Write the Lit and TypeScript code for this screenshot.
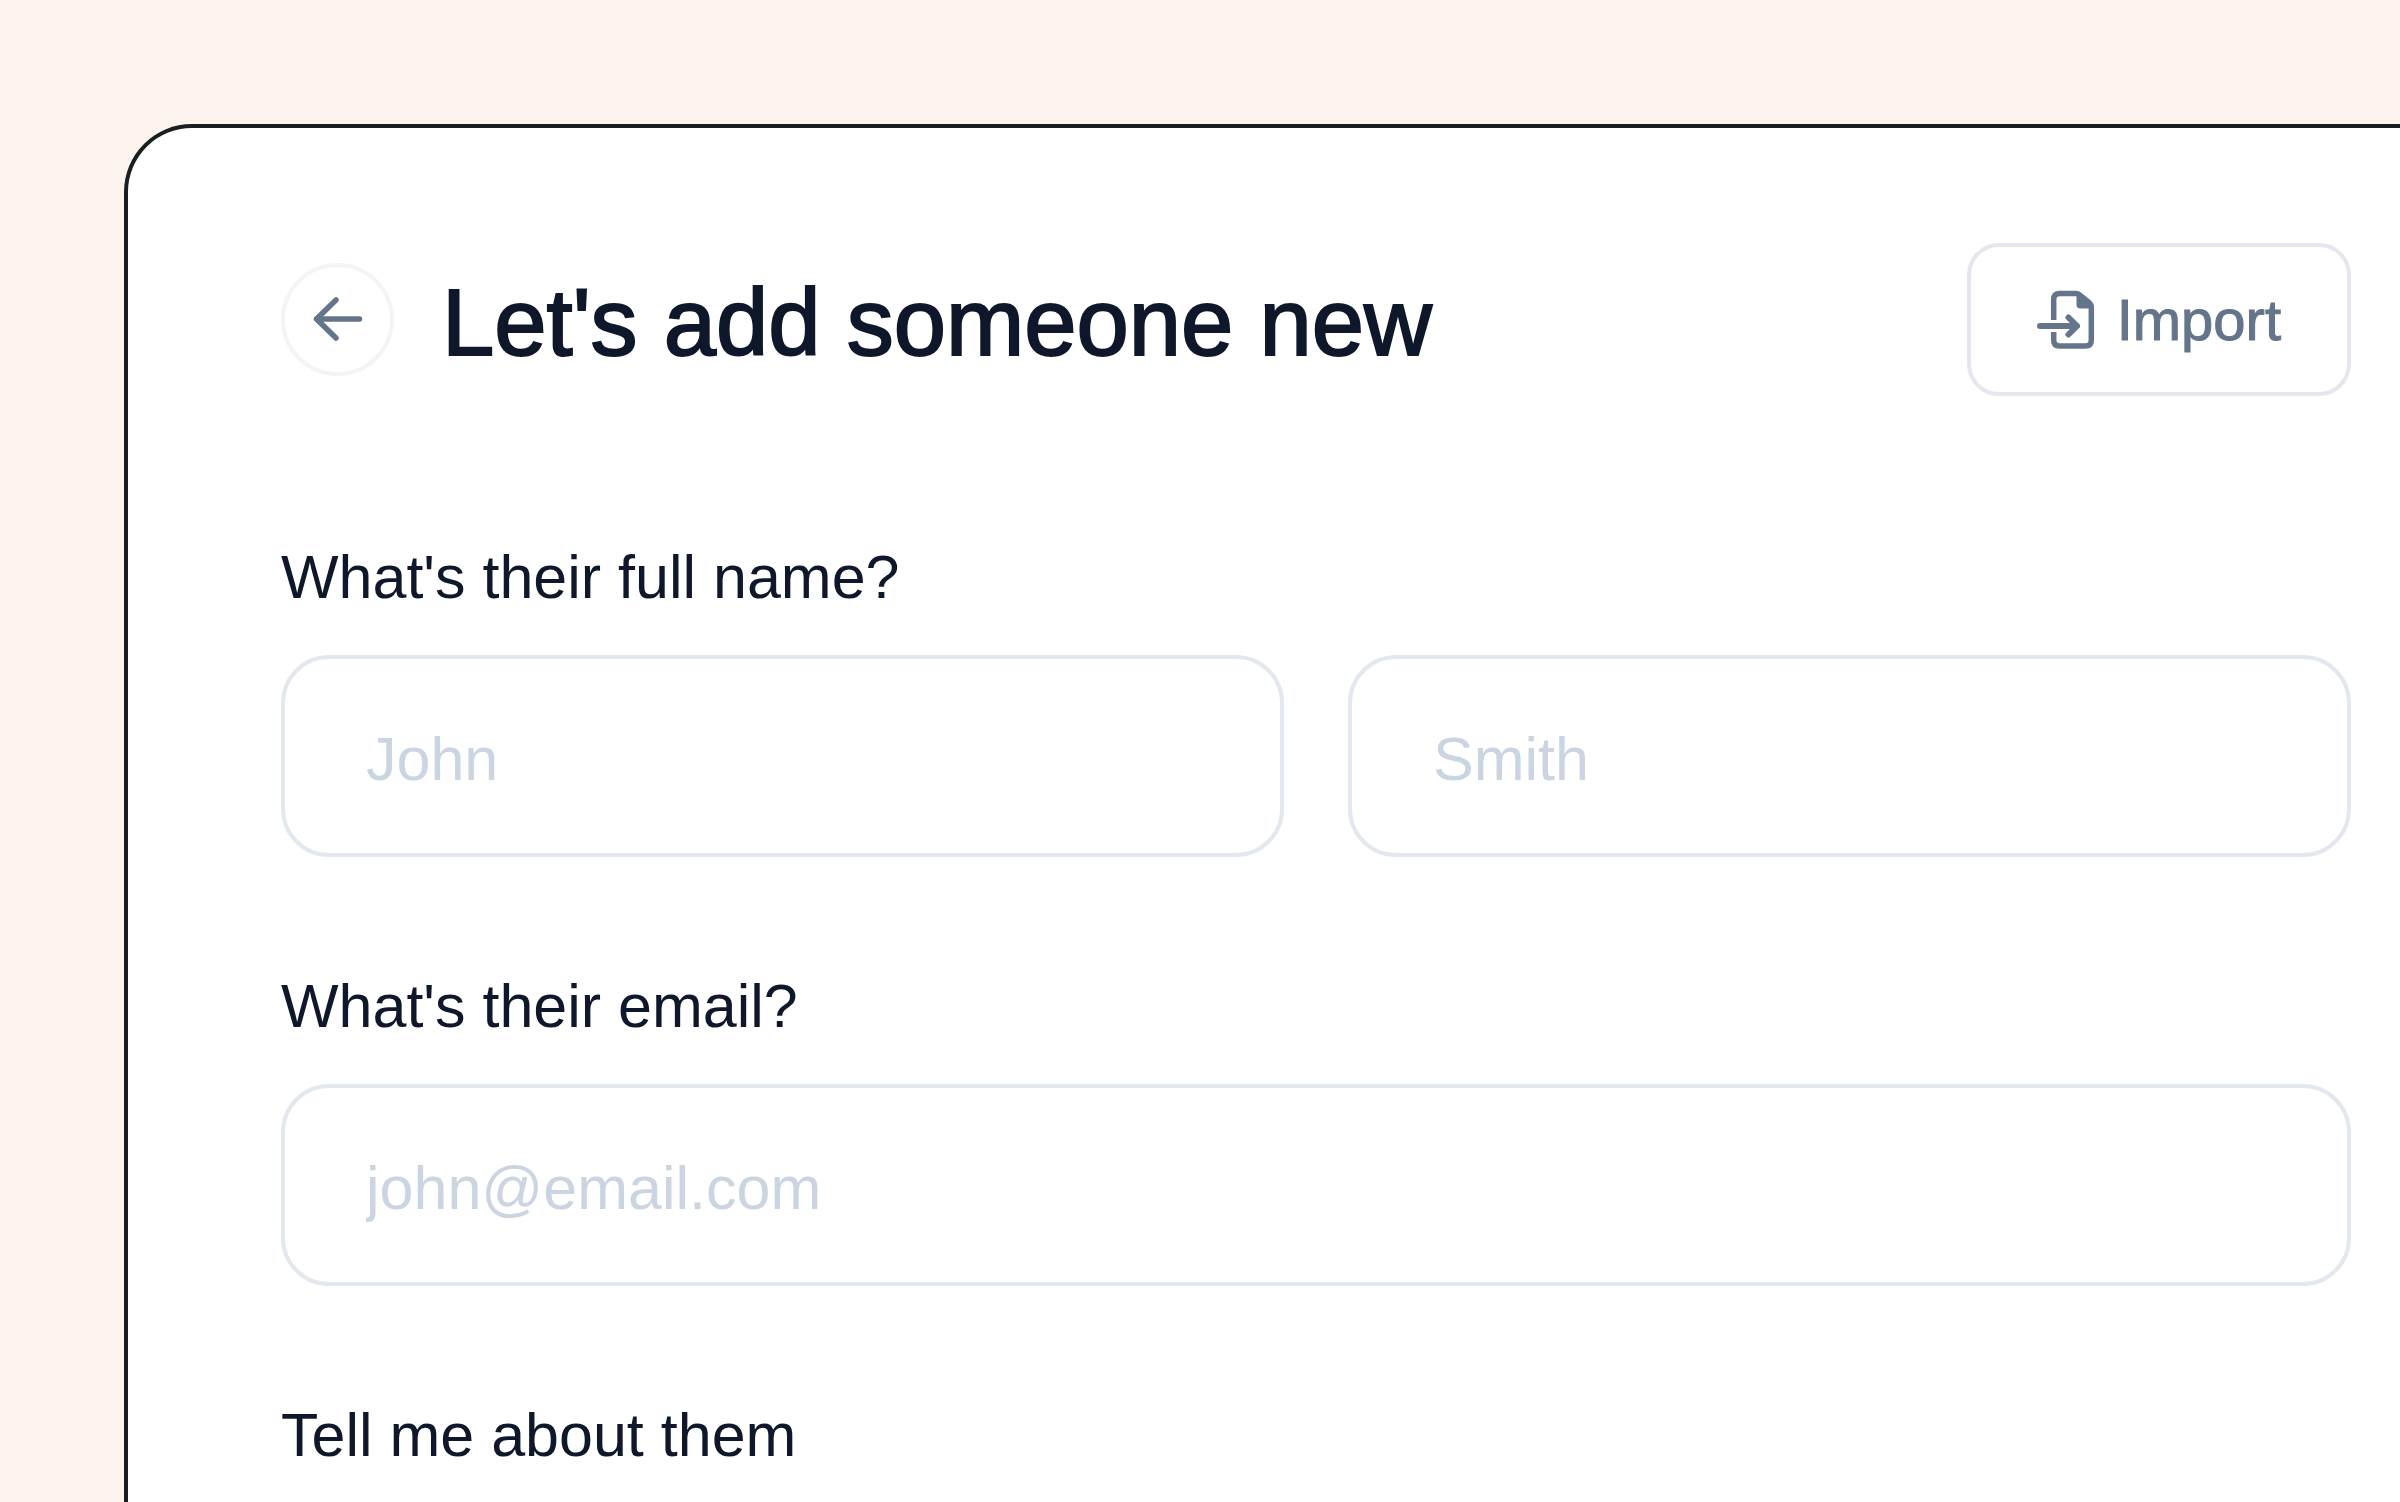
import { LitElement, html, css } from "lit";
import { customElement } from "lit/decorators.js";

@customElement("app-root")
export class AppRoot extends LitElement {
  static styles = css`
    :host {
      display: block;
      box-sizing: border-box;
      height: 100vh;
      padding: 124px 0 0 124px;
      overflow: hidden;
      background: #fdf3ee;
      color: #0f172a;
      font-family: "Liberation Sans", Helvetica, Arial, sans-serif;
    }
    .card {
      box-sizing: border-box;
      min-height: 100%;
      padding: 115px 49px 115px 153px;
      border: 4px solid #18201f;
      border-right: 0;
      border-bottom: 0;
      border-radius: 68px 0 0 0;
      background: #fff;
    }
    .header {
      display: flex;
      align-items: center;
      gap: 48px;
      margin-bottom: 146px;
    }
    .back {
      display: flex;
      flex: none;
      align-items: center;
      justify-content: center;
      box-sizing: border-box;
      width: 113px;
      height: 113px;
      padding: 0;
      border: 4px solid #f4f4f7;
      border-radius: 50%;
      background: none;
      color: #64748b;
    }
    .title {
      flex: 1;
      margin: 0;
      padding-top: 6px;
      font-size: 94px;
      line-height: 112px;
      font-weight: 400;
      -webkit-text-stroke: 2px currentColor;
    }
    .import {
      display: flex;
      flex: none;
      align-items: center;
      gap: 22px;
      box-sizing: border-box;
      height: 153px;
      padding: 0 66px;
      border: 4px solid #e4e7ee;
      border-radius: 32px;
      background: none;
      color: #64748b;
      font-family: inherit;
      font-size: 58px;
      line-height: 64px;
      -webkit-text-stroke: 1px currentColor;
    }
    .icon {
      display: block;
      flex: none;
    }
    .form {
      display: flex;
      flex-direction: column;
      gap: 114px;
    }
    .field {
      display: flex;
      flex-direction: column;
      gap: 42px;
      min-width: 0;
      margin: 0;
    }
    .label {
      font-size: 61px;
      line-height: 71px;
    }
    .pair {
      display: grid;
      grid-template-columns: 1fr 1fr;
      gap: 64px;
    }
    .input {
      box-sizing: border-box;
      width: 100%;
      min-width: 0;
      height: 202px;
      padding: 6px 81px 0;
      border: 4px solid #e2e8ee;
      border-radius: 48px;
      outline: none;
      background: #fff;
      color: inherit;
      font-family: inherit;
      font-size: 61px;
      resize: none;
    }
    .input::placeholder {
      color: #cbd5e1;
      opacity: 1;
    }
  `;

  render() {
    return html`
      <main class="card">
        <header class="header">
          <button class="back" type="button" aria-label="Back">
            <svg class="icon" width="56" height="56" viewBox="0 0 56 56" fill="none" stroke="currentColor"
              stroke-width="5.5" stroke-linecap="round" stroke-linejoin="round" aria-hidden="true">
              <path d="M49.5 27H6.5M26 8L6.5 27L26 46" />
            </svg>
          </button>
          <h1 class="title">Let's add someone new</h1>
          <button class="import" type="button">
            <svg class="icon" width="58" height="60" viewBox="0 0 58 60" fill="none" stroke="currentColor"
              stroke-width="5.5" stroke-linejoin="round" aria-hidden="true">
              <path d="M16.7 30V9.5Q16.7 3.5 22.7 3.5H39Q41 3.5 42.5 4.8L52.5 13Q54.3 14.6 54.3 17V50Q54.3 56 48.3 56H22.7Q16.7 56 16.7 50V42" />
              <path d="M39.5 2V14.5Q39.5 18.5 43.5 18.5H56V15L43 3Z" fill="currentColor" stroke="none" />
              <path d="M3 36H40M31.5 27.5L40 36L31.5 44.5" stroke-linecap="round" stroke-width="6" />
            </svg>
            Import
          </button>
        </header>
        <form class="form">
          <div class="field" role="group" aria-labelledby="name-label">
            <label class="label" id="name-label" for="first">What's their full name?</label>
            <div class="pair">
              <input class="input" id="first" type="text" placeholder="John" />
              <input class="input" id="last" type="text" placeholder="Smith" aria-labelledby="name-label" />
            </div>
          </div>
          <div class="field">
            <label class="label" for="email">What's their email?</label>
            <input class="input" id="email" type="email" placeholder="john@email.com" />
          </div>
          <div class="field">
            <label class="label" for="about">Tell me about them</label>
            <textarea class="input" id="about"></textarea>
          </div>
        </form>
      </main>
    `;
  }
}
